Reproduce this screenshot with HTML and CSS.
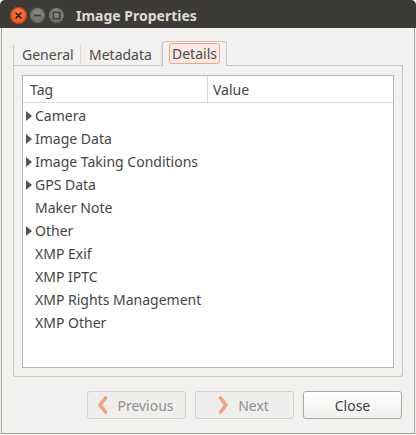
FILE: index.html
```html
<!DOCTYPE html>
<html>
<head>
<meta charset="utf-8">
<link rel="stylesheet" href="styles.css">
</head>
<body>
<div class="window">
  <div class="titlebar">
    <div class="wbtns">
      <span class="wbtn close"><svg width="17" height="17" viewBox="0 0 17 17"><path d="M6 6 L11 11 M11 6 L6 11" stroke="#3a1a0c" stroke-width="1.6" stroke-linecap="round"/></svg></span>
      <span class="wbtn"><svg width="17" height="17" viewBox="0 0 17 17"><path d="M5 8.5 H12" stroke="#3a3a38" stroke-width="1.6"/></svg></span>
      <span class="wbtn"><svg width="17" height="17" viewBox="0 0 17 17"><rect x="5.3" y="5.3" width="6.4" height="6.4" fill="none" stroke="#3a3a38" stroke-width="1.4"/></svg></span>
    </div>
    <div class="title">Image Properties</div>
  </div>
  <div class="content">
    <div class="notebook">
      <div class="tabs">
        <div class="tab">General</div>
        <div class="tab">Metadata</div>
        <div class="tab active"><span class="focus">Details</span></div>
        <div class="tabfill"></div>
      </div>
      <div class="panel">
        <div class="tree">
          <div class="thead">
            <div class="col c1">Tag</div>
            <div class="col c2">Value</div>
          </div>
          <div class="rows">
            <div class="row"><span class="exp"></span>Camera</div>
            <div class="row"><span class="exp"></span>Image Data</div>
            <div class="row"><span class="exp"></span>Image Taking Conditions</div>
            <div class="row"><span class="exp"></span>GPS Data</div>
            <div class="row"><span class="noexp"></span>Maker Note</div>
            <div class="row"><span class="exp"></span>Other</div>
            <div class="row"><span class="noexp"></span>XMP Exif</div>
            <div class="row"><span class="noexp"></span>XMP IPTC</div>
            <div class="row"><span class="noexp"></span>XMP Rights Management</div>
            <div class="row"><span class="noexp"></span>XMP Other</div>
          </div>
        </div>
      </div>
    </div>
    <div class="buttons">
      <div class="btn disabled"><svg class="chev" width="11" height="18" viewBox="0 0 11 18"><polyline points="8.5,2 3,9 8.5,16" fill="none" stroke="#eea27e" stroke-width="3.6" stroke-linecap="round" stroke-linejoin="round"/></svg>Previous</div>
      <div class="btn disabled"><svg class="chev" width="11" height="18" viewBox="0 0 11 18"><polyline points="2.5,2 8,9 2.5,16" fill="none" stroke="#eea27e" stroke-width="3.6" stroke-linecap="round" stroke-linejoin="round"/></svg>Next</div>
      <div class="btn">Close</div>
    </div>
  </div>
</div>
</body>
</html>
```

FILE: styles.css
```css
* { box-sizing: border-box; }
html, body { margin: 0; padding: 0; }
body {
  width: 416px;
  height: 435px;
  background: #f2f1f0;
  font-family: "Noto Sans", "Open Sans", sans-serif;
  font-size: 14px;
  color: #454545;
  overflow: hidden;
}
.window {
  width: 416px;
  height: 434px;
  display: flex;
  flex-direction: column;
}
.titlebar {
  height: 28px;
  background: #3c3b37;
  border-radius: 5px 5px 0 0;
  display: flex;
  align-items: center;
  padding-left: 10px;
  padding-top: 2px;
  flex-shrink: 0;
}
.wbtns { display: flex; gap: 2px; }
.wbtn {
  width: 17px;
  height: 17px;
  border-radius: 50%;
  background: radial-gradient(circle at 50% 35%, #8a8985, #5f5e5a);
  box-shadow: inset 0 0 0 1px #3a3935;
  display: flex;
}
.wbtn.close {
  background: radial-gradient(circle at 50% 35%, #f57b4f, #de4a16);
  box-shadow: inset 0 0 0 1px #b13c10;
}
.title {
  margin-left: 11px;
  font-weight: bold;
  font-size: 14px;
  color: #dfdbd2;
}
.content {
  flex: 1;
  margin: 0 1px 0 1px;
  border-left: 1px solid #a3a29e;
  border-right: 1px solid #a3a29e;
  border-bottom: 1px solid #a3a29e;
  padding: 13px 11px 13px 11px;
  display: flex;
  flex-direction: column;
}
.notebook { display: flex; flex-direction: column; }
.tabs {
  display: flex;
  align-items: flex-end;
  height: 25px;
}
.tab {
  height: 21px;
  padding: 0 7px 0 8px;
  border-right: 1px solid #dcdbd7;
  border-bottom: 1px solid #c6c5c1;
  display: flex;
  align-items: center;
  color: #4c4c4c;
  line-height: 1;
}
.tab:first-child { border-left: 1px solid #c6c5c1; width: 68px; }
.tab:nth-child(2) { width: 81px; }
.tab.active {
  height: 25px;
  width: 65px;
  border: 1px solid #c6c5c1;
  border-bottom: none;
  border-radius: 3px 3px 0 0;
  padding: 0 5px 0 6px;
  align-items: flex-start;
  padding-top: 1px;
}
.focus {
  display: flex;
  align-items: center;
  height: 21px;
  padding: 0 2px;
  border: 1px solid #f1a48a;
  border-radius: 3px;
  background: #fbeae3;
}
.tabfill {
  flex: 1;
  height: 1px;
  border-bottom: 1px solid #c6c5c1;
  border-right: 1px solid #c6c5c1;
  border-top-right-radius: 3px;
}
.panel {
  border: 1px solid #c6c5c1;
  border-top: none;
  border-radius: 0 0 3px 3px;
  padding: 9px 8px 8px 8px;
  height: 311px;
}
.tree {
  height: 100%;
  background: #ffffff;
  border: 1px solid #b7b6b2;
  display: flex;
  flex-direction: column;
}
.thead {
  display: flex;
  height: 27px;
  border-bottom: 1px solid #d9d8d5;
  flex-shrink: 0;
}
.col {
  display: flex;
  align-items: center;
  color: #454545;
}
.c1 { width: 185px; padding-left: 7px; border-right: 1px solid #dad9d6; }
.c2 { flex: 1; padding-left: 5px; }
.rows { display: flex; flex-direction: column; padding-top: 1px; }
.row {
  height: 23px;
  display: flex;
  align-items: center;
  padding-left: 3px;
  color: #454545;
}
.noexp {
  width: 9px;
  height: 10px;
  flex-shrink: 0;
}
.exp {
  width: 0;
  height: 0;
  flex-shrink: 0;
  border-top: 5px solid transparent;
  border-bottom: 5px solid transparent;
  border-left: 6px solid #555555;
  margin-right: 3px;
}
.buttons {
  margin-top: 14px;
  display: flex;
  justify-content: flex-end;
  gap: 9px;
  padding-right: 1px;
}
.btn {
  width: 99px;
  height: 28px;
  border: 1px solid #a8a7a3;
  border-radius: 3px;
  background: linear-gradient(#ffffff, #f0efee);
  display: flex;
  align-items: center;
  justify-content: center;
  color: #3c3c3c;
}
.btn.disabled {
  border-color: #d2d1cd;
  background: #efeeed;
  color: #8e8e8e;
}
.chev { margin-right: 9px; margin-left: -2px; }
```
